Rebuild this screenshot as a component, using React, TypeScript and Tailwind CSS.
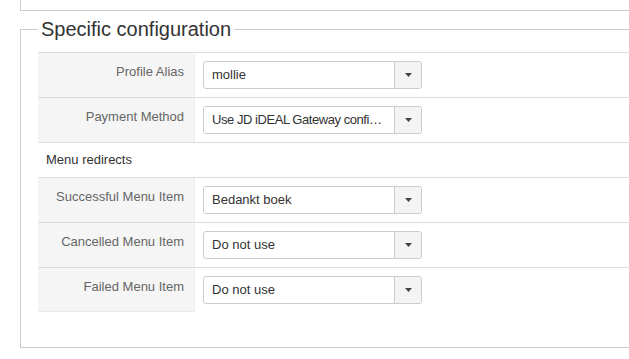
import React from "react";

type Field = { label: string; value: string; tight?: boolean };

const ROWS_TOP: Field[] = [
  { label: "Profile Alias", value: "mollie" },
  { label: "Payment Method", value: "Use JD iDEAL Gateway confi…", tight: true },
];

const ROWS_MENU: Field[] = [
  { label: "Successful Menu Item", value: "Bedankt boek" },
  { label: "Cancelled Menu Item", value: "Do not use" },
  { label: "Failed Menu Item", value: "Do not use" },
];

const SelectBox = ({ value, tight }: { value: string; tight?: boolean }) => (
  <div className="flex h-[28px] w-[219px] rounded-[3px] border border-[#cccccc] bg-white">
    <span
      className={`min-w-0 flex-1 overflow-hidden whitespace-nowrap pl-[8px] text-[13px] leading-[26px] text-[#333333] ${
        tight ? "tracking-[-0.45px]" : ""
      }`}
    >
      {value}
    </span>
    <span className="flex w-[27px] shrink-0 items-center justify-center rounded-r-[3px] border-l border-[#cccccc] bg-[#f4f4f4]">
      <svg width="7" height="4" viewBox="0 0 7 4">
        <path d="M0 0h7L3.5 4z" fill="#444444" />
      </svg>
    </span>
  </div>
);

const FieldRow = ({ field, last }: { field: Field; last?: boolean }) => (
  <div className="flex border-t border-[#dddddd]">
    <div
      className={`w-[157px] shrink-0 border-r border-[#eeeeee] bg-[#f5f5f5] pr-[10px] pt-[10px] text-right text-[13px] leading-[18px] text-[#666666] ${
        last ? "border-b border-b-[#e8e8e8]" : ""
      }`}
    >
      {field.label}
    </div>
    <div className="flex-1 py-[8px] pl-[8px]">
      <SelectBox value={field.value} tight={field.tight} />
    </div>
  </div>
);

export default function App() {
  return (
    <div className="h-[359px] w-[629px] overflow-hidden bg-white pl-[20px] font-['Liberation_Sans',Arial,sans-serif]">
      {/* previous fieldset bottom */}
      <div className="h-[11px] w-[700px] border-b border-l border-[#cccccc]" />

      <fieldset className="mt-[4px] w-[700px] border border-[#cccccc] px-[17px] pb-[35px] pt-[9px]">
        <legend className="px-[3px] text-[20px] leading-[28px] text-[#333333]">Specific configuration</legend>

        <div className="flex flex-col">
          {ROWS_TOP.map((f) => (
            <FieldRow key={f.label} field={f} />
          ))}
          <div className="border-t border-[#dddddd] py-[8px] pl-[8px] text-[13px] leading-[18px] text-[#333333]">
            Menu redirects
          </div>
          {ROWS_MENU.map((f, i) => (
            <FieldRow key={f.label} field={f} last={i === ROWS_MENU.length - 1} />
          ))}
        </div>
      </fieldset>
    </div>
  );
}
